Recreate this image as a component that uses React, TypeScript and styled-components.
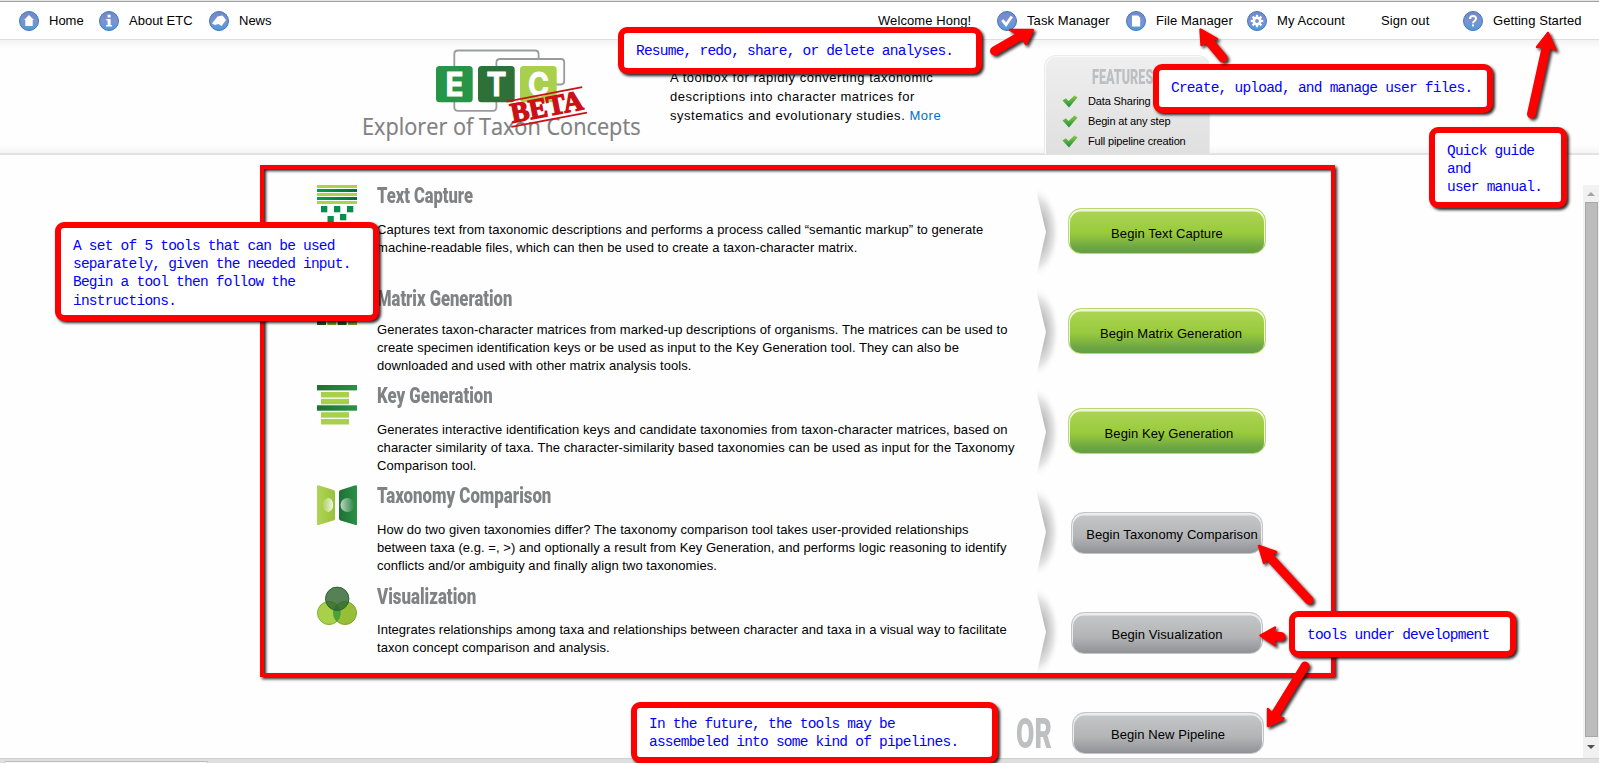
import React from "react";
import styled, { createGlobalStyle, css } from "styled-components";

const GlobalStyle = createGlobalStyle`
  *, *::before, *::after { box-sizing: border-box; }
  html, body { margin: 0; padding: 0; overflow: hidden; }
  body { background: #fefefe; color: #000; font: 13px "Liberation Sans", Arial, sans-serif; }
  h1, h2, h3, p, ul { margin: 0; padding: 0; font-weight: normal; }
`;

/* ---------- page frame ---------- */

const Page = styled.div`
  position: relative;
  display: flex;
  flex-direction: column;
  width: 1599px;
  height: 763px;
  overflow: hidden;
  background: #fefefe;
`;

const WindowEdge = styled.div`
  height: 2px;
  background: #e4e4e4;
  border-bottom: 1px solid #a0a0a0;
`;

const NavBar = styled.nav`
  display: flex;
  justify-content: space-between;
  height: 38px;
  padding: 9px 0 0 19px;
  border-bottom: 1px solid #dedede;
  background: #fff;
`;

const NavGroup = styled.div<{ $spacing?: number }>`
  display: flex;
  letter-spacing: ${(p) => p.$spacing ?? 0}px;
`;

const NavItem = styled.a<{ $width: number }>`
  display: flex;
  align-items: center;
  gap: 10px;
  width: ${(p) => p.$width}px;
  height: 20px;
  line-height: 20px;
  white-space: nowrap;
  color: #000;
`;

const Header = styled.header`
  display: flex;
  height: 115px;
  padding-left: 350px;
  border-bottom: 2px solid #e2e2e2;
  background: linear-gradient(#f3f3f3, #fefefe 9px, #fefefe calc(100% - 8px), #f5f5f5);
`;

const Intro = styled.div`
  flex: none;
  width: 394px;
  padding: 28px 0 0 20px;
  line-height: 19px;
  white-space: nowrap;
  letter-spacing: 0.54px;
`;

const MoreLink = styled.a`
  color: #0070cc;
`;

const Features = styled.aside`
  width: 166px;
  height: 99px;
  margin-top: 15px;
  padding: 11px 0 0 17px;
  border: 1px solid #ebebeb;
  border-bottom: 0;
  border-radius: 12px 12px 0 0;
  background: linear-gradient(#efefef, #dfdfdf);
  box-shadow: inset 1px 1px 0 #fafafa;
`;

const FeatureRow = styled.div`
  display: flex;
  align-items: center;
  gap: 10px;
  height: 20px;
  font-size: 11px;
  letter-spacing: -0.15px;
  white-space: nowrap;
`;

const Condensed = styled.span<{ $size: number; $stretch: number }>`
  display: block;
  width: max-content;
  font-family: Roboto, "Liberation Sans Narrow", sans-serif;
  font-weight: 900;
  font-size: ${(p) => p.$size}px;
  line-height: 1;
  white-space: nowrap;
  transform: scaleX(${(p) => p.$stretch});
  transform-origin: left;
`;

const FeaturesTitle = styled.div`
  height: 24px;
  margin-left: 30px;
  color: #bcbec0;
`;

/* ---------- tools ---------- */

const Main = styled.main`
  display: flex;
  flex: 1;
  justify-content: space-between;
  min-height: 0;
`;

const Content = styled.div`
  padding: 10px 0 0 260px;
`;

const ToolFrame = styled.section`
  width: 1075px;
  height: 512px;
  padding-top: 3px;
  overflow: hidden;
  border: 4px solid #f00;
  box-shadow: 2px 2px 3px rgba(0, 0, 0, 0.85), inset 2px 2px 3px rgba(0, 0, 0, 0.85);
`;

const ToolRow = styled.article`
  display: grid;
  grid-template-columns: 60px 655px 36px 198px;
  height: 100px;
  padding-left: 53px;
`;

const IconCell = styled.div`
  padding-top: 13px;
  svg { display: block; }
`;

const ToolTitle = styled.h2<{ $top: number }>`
  height: 49px;
  padding-top: ${(p) => p.$top}px;
  color: #808285;
`;

const ToolText = styled.p<{ $spacing: number }>`
  line-height: 18px;
  white-space: nowrap;
  letter-spacing: ${(p) => p.$spacing}px;
`;

const ButtonCell = styled.div<{ $top: number }>`
  display: flex;
  align-items: flex-start;
  justify-content: center;
  padding-top: ${(p) => p.$top}px;
`;

const buttonTones = {
  green: css`
    width: 198px;
    height: 46px;
    padding-top: 5px;
    border-color: #b9da72;
    background: linear-gradient(#aed556, #98ca3c 55%, #6ca544 88%, #62a043);
    box-shadow: inset 0 1.5px 0 1px #eef7da;
  `,
  grey: css`
    width: 192px;
    height: 42px;
    padding-top: 2px;
    border-color: #c3c4c6;
    background: linear-gradient(#c6c8ca, #b2b4b6 60%, #919296);
    box-shadow: inset 0 1.5px 0 1px #ececed;
  `,
};

const BeginButton = styled.button<{ $tone: "green" | "grey"; $shift: number }>`
  display: flex;
  align-items: center;
  justify-content: center;
  padding: 0 0 0 ${(p) => Math.max(0, p.$shift * 2)}px;
  border: 1px solid;
  border-radius: 13px;
  font: 13px "Liberation Sans", Arial, sans-serif;
  letter-spacing: 0.08px;
  white-space: nowrap;
  color: #000;
  ${(p) => buttonTones[p.$tone]}
`;

const PipelineRow = styled.div`
  display: flex;
  align-items: flex-start;
  padding: 35px 0 0 756px;
`;

const OrWord = styled.div`
  width: 56px;
  padding-top: 0;
  color: #bdbfc1;
`;

/* ---------- window chrome ---------- */

const ScrollBar = styled.div`
  display: flex;
  flex-direction: column;
  align-items: center;
  width: 16px;
  margin-top: 30px;
  background: #f1f1f1;
`;

const ScrollButton = styled.div<{ $height: number }>`
  display: flex;
  align-items: center;
  height: ${(p) => p.$height}px;
`;

const ScrollThumb = styled.div`
  width: 13px;
  height: 536px;
  border: 1px solid #a8a8a8;
  background: #bcbcbc;
`;

const StatusBar = styled.footer`
  display: flex;
  height: 5px;
  padding: 2px 0 0 4px;
  border-top: 1px solid #cfcfcf;
  background: #dfdfdf;
`;

const StatusTab = styled.div`
  width: 204px;
  border: 1px solid #bdbdbd;
  border-bottom: 0;
  border-radius: 3px 3px 0 0;
  background: #f8f8f8;
`;

/* ---------- annotations over the page ---------- */

const Callout = styled.div<{ $x: number; $y: number; $w: number; $h: number; $pad?: number }>`
  position: absolute;
  left: ${(p) => p.$x}px;
  top: ${(p) => p.$y}px;
  width: ${(p) => p.$w}px;
  height: ${(p) => p.$h}px;
  padding: ${(p) => p.$pad ?? 9}px 0 0 12px;
  border: 6px solid #f00;
  border-radius: 9px;
  background: #fff;
  box-shadow: 2px 2px 3px rgba(0, 0, 0, 0.85);
  color: #00f;
  font: 14.5px/18.2px "Liberation Mono", monospace;
  letter-spacing: -0.77px;
  white-space: nowrap;
`;

const ArrowLayer = styled.svg`
  position: absolute;
  inset: 0;
  filter: drop-shadow(2px 2px 1.5px rgba(0, 0, 0, 0.8));
`;

type Point = [number, number];

function Arrow({ tail, tip, a, b }: { tail: Point; tip: Point; a: Point; b: Point }) {
  const mid: Point = [(a[0] + b[0]) / 2, (a[1] + b[1]) / 2];
  const notch: Point = [mid[0] + (tip[0] - mid[0]) * 0.2, mid[1] + (tip[1] - mid[1]) * 0.2];
  return (
    <g fill="#f00" stroke="#f00" strokeLinecap="round" strokeLinejoin="round">
      <line x1={tail[0]} y1={tail[1]} x2={notch[0]} y2={notch[1]} strokeWidth="9" />
      <polygon points={[tip, a, notch, b].map((p) => p.join(",")).join(" ")} strokeWidth="2.5" />
    </g>
  );
}

/* ---------- drawings ---------- */

type NavGlyph = "home" | "info" | "news" | "task" | "file" | "account" | "help";

const glyphs: Record<NavGlyph, React.ReactNode> = {
  home: <path d="M10 4 15 9H13.7V15H6.3V9H5Z" fill="#fff" />,
  info: <path d="M8.6 3.8h3v2.6h-3zM7.3 8h4.3v6h1.3v1.6H7.1V14h1.5V9.6H7.3z" fill="#fff" />,
  news: <path d="M3 12.5 8.5 5.500 13.500 4.500 17 9 12.500 15 9.500 13 6 14Z" fill="#fff" />,
  task: <path d="M5.3 9.2 9 13.7 14.8 5.5" fill="none" stroke="#fff" strokeWidth="2.8" />,
  file: <path d="M6 4.5h6l2.2 2.2V15.5H6Z" fill="#fff" />,
  account: (
    <g>
      <circle cx="10" cy="10" r="3.2" fill="none" stroke="#fff" strokeWidth="2.6" />
      {[0, 45, 90, 135, 180, 225, 270, 315].map((a) => (
        <rect key={a} x="8.9" y="3.8" width="2.2" height="3" fill="#fff" transform={`rotate(${a} 10 10)`} />
      ))}
    </g>
  ),
  help: (
    <g>
      <path d="M7 8q0-3 3-3t3 2.6q0 1.5-1.5 2.4T10 12.3" fill="none" stroke="#fff" strokeWidth="2" />
      <rect x="9" y="13.4" width="2" height="2" fill="#fff" />
    </g>
  ),
};

function NavIcon({ glyph }: { glyph: NavGlyph }) {
  return (
    <svg width="20" height="20" viewBox="0 0 20 20">
      <circle cx="10" cy="10" r="9.5" fill="url(#orb)" stroke="#3f78b8" strokeWidth="1" />
      {glyphs[glyph]}
    </svg>
  );
}

const DefsSvg = styled.svg`
  position: absolute;
  width: 0;
  height: 0;
`;

function Gradients() {
  return (
    <DefsSvg>
      <defs>
        <linearGradient id="orb" x1="0" y1="0" x2="0" y2="1">
          <stop offset="0" stopColor="#6f86c9" />
          <stop offset=".5" stopColor="#7c93d0" />
          <stop offset="1" stopColor="#4d9bdc" />
        </linearGradient>
        <linearGradient id="dark" x1="0" y1="0" x2="1" y2="0">
          <stop offset="0" stopColor="#1f7034" />
          <stop offset="1" stopColor="#2a9146" />
        </linearGradient>
        <linearGradient id="teal" x1="0" y1="0" x2="1" y2="0">
          <stop offset="0" stopColor="#00a14c" />
          <stop offset="1" stopColor="#006f3a" />
        </linearGradient>
        <linearGradient id="light" x1="0" y1="0" x2="1" y2="0">
          <stop offset="0" stopColor="#b1d456" />
          <stop offset="1" stopColor="#98c23c" />
        </linearGradient>
        <linearGradient id="tick" x1="0" y1="0" x2="0" y2="1">
          <stop offset="0" stopColor="#8cc63f" />
          <stop offset="1" stopColor="#17913c" />
        </linearGradient>
        <linearGradient id="moonL" x1="0" y1="0" x2="1" y2="0">
          <stop offset="0" stopColor="#fff" stopOpacity=".1" />
          <stop offset="1" stopColor="#fff" stopOpacity=".85" />
        </linearGradient>
        <linearGradient id="moonR" x1="0" y1="0" x2="1" y2="0">
          <stop offset="0" stopColor="#fff" stopOpacity=".7" />
          <stop offset="1" stopColor="#fff" stopOpacity="0" />
        </linearGradient>
        <clipPath id="foldClip"><path d="M0 0H30V90H0L5 84 14 44 4 2Z" /></clipPath>
        <radialGradient id="foldShade" gradientUnits="userSpaceOnUse" cx="0" cy="0" r="1"
          gradientTransform="translate(4 44) scale(24 45)">
          <stop offset=".3" stopColor="#b0b0b0" />
          <stop offset=".5" stopColor="#c8c8c8" />
          <stop offset=".75" stopColor="#e6e6e6" />
          <stop offset="1" stopColor="#fefefe" stopOpacity="0" />
        </radialGradient>
      </defs>
    </DefsSvg>
  );
}

function CaptureIcon() {
  return (
    <svg width="40" height="40">
      {[0, 8, 16].map((y) => <rect key={y} y={y} width="40" height="3" fill="#acd24c" />)}
      {[4, 12].map((y) => <rect key={y} y={y} width="40" height="3" fill="url(#teal)" />)}
      {[[4, 21], [17, 21], [30, 21], [10.5, 31], [23, 29]].map(([x, y]) => (
        <rect key={x} x={x} y={y} width="6.3" height="6.3" fill="#04904a" />
      ))}
    </svg>
  );
}

function MatrixIcon() {
  return (
    <svg width="40" height="40">
      {[0, 10, 20, 30.5].map((y) =>
        [0, 10.3, 20.6, 31].map((x, i) => (
          <rect key={`${x}-${y}`} x={x} y={y} width="9" height="9.5" fill={i % 2 ? "#7f9e2a" : "#1e4e24"} />
        )),
      )}
    </svg>
  );
}

function KeyIcon() {
  return (
    <svg width="40" height="40">
      {[0, 20.3].map((y) => <rect key={y} y={y} width="40" height="5.4" fill="url(#dark)" />)}
      {[7, 13.8, 27.2, 34].map((y) => <rect key={y} x="4" y={y} width="28" height="5.5" fill="#a9d04a" />)}
    </svg>
  );
}

function ComparisonIcon() {
  return (
    <svg width="40" height="40">
      <path d="M0 1.5Q0 0 1.5 .2L16.5 5Q18 5.7 18 7V33.5Q18 35 16.5 35.4L1.5 40H0Z" fill="url(#light)" />
      <path d="M40 1.5Q40 0 38.5 .2L23.5 5Q22 5.7 22 7V33.5Q22 35 23.5 35.4L38.5 40H40Z" fill="url(#dark)" />
      <path d="M6 20a6 6 0 0 1 6-7a7 7 0 0 1 4 7a7 7 0 0 1-4 7a6 6 0 0 1-6-7Z" fill="url(#moonL)" />
      <circle cx="30.5" cy="20" r="7" fill="url(#moonR)" />
    </svg>
  );
}

function VennIcon() {
  return (
    <svg width="40" height="40">
      <circle cx="12" cy="28" r="11.5" fill="#a8d048" stroke="#7db23a" />
      <circle cx="28" cy="28" r="11.5" fill="#96be36" stroke="#7aa832" />
      <path d="M20 19.5a11.5 11.5 0 0 1 0 17a11.5 11.5 0 0 1 0-17Z" fill="#4aa03a" />
      <circle cx="20.2" cy="13.8" r="11.7" fill="#2f6530" fillOpacity=".82" stroke="#2b6632" />
    </svg>
  );
}

const Fold = styled.div`
  padding-top: 16px;
  svg { display: block; }
`;

function FoldArrow() {
  return (
    <Fold>
      <svg width="30" height="90" viewBox="0 0 30 90">
        <rect width="30" height="90" fill="url(#foldShade)" clipPath="url(#foldClip)" />
      </svg>
    </Fold>
  );
}

const LogoSvg = styled.svg`
  display: block;
  flex: none;
  width: 300px;
  height: 110px;
`;

function Logo() {
  const letters: [string, number, string, number][] = [
    ["E", 86, "#279548", 18],
    ["T", 128, "#2d7038", 20],
    ["C", 170, "#a9d04c", 21],
  ];
  return (
    <LogoSvg viewBox="0 0 300 110">
      <g fill="none" stroke="#999b9d" strokeWidth="1.8">
        <path d="M104.3 28V14Q104.3 10.5 108 10.5H185Q188.6 10.5 188.6 14V19" />
        <path d="M146.4 28V22.5Q146.4 19 150 19H211Q214.2 19 214.2 22.5V41Q214.2 44.5 211 44.5H205" />
        <path d="M104.3 60V67Q104.3 70.8 108 70.8H143Q146.4 70.8 146.4 67V60" />
      </g>
      {letters.map(([ch, x, fill, w]) => (
        <g key={ch}>
          <rect x={x} y="26" width="36.7" height="36.3" rx="3.5" fill={fill} />
          <text x={x + 18.5} y="55.5" textAnchor="middle" fill="#fff" stroke="#fff" strokeWidth=".8"
            textLength={w} lengthAdjust="spacingAndGlyphs"
            fontFamily="Inter, sans-serif" fontWeight="700" fontSize="33">{ch}</text>
        </g>
      ))}
      <text x="12" y="95.3" fill="#808080" stroke="#808080" strokeWidth=".2"
        textLength="278.5" lengthAdjust="spacingAndGlyphs"
        fontFamily='"Open Sans", sans-serif' fontSize="23.5">Explorer of Taxon Concepts</text>
      <g transform="translate(156.5 61.5) rotate(-10.8)" fill="#cc1016">
        <rect x="0" y="-.8" width="77" height="1.8" />
        <rect x="0" y="25" width="77" height="1.8" />
        <text x="2" y="22" textLength="73" lengthAdjust="spacingAndGlyphs" stroke="#cc1016" strokeWidth="1.4"
          fontFamily='"Liberation Serif", serif' fontWeight="700" fontSize="28">BETA</text>
      </g>
    </LogoSvg>
  );
}

function Tick() {
  return (
    <svg width="16" height="13" viewBox="0 0 16 13">
      <path d="M.5 5.5 4 3.2 6.5 6 12.5 .6 15.5 2.5 7 12.5Z" fill="url(#tick)" />
    </svg>
  );
}

/* ---------- data ---------- */

const tools = [
  {
    title: "Text Capture", stretch: 0.733, top: 12, icon: <CaptureIcon />, spacing: 0.05,
    lines: [
      "Captures text from taxonomic descriptions and performs a process called “semantic markup” to generate",
      "machine-readable files, which can then be used to create a taxon-character matrix.",
    ],
    button: "Begin Text Capture", tone: "green" as const, shift: -1,
  },
  {
    title: "Matrix Generation", stretch: 0.738, top: 15, icon: <MatrixIcon />, spacing: 0.055,
    lines: [
      "Generates taxon-character matrices from marked-up descriptions of organisms. The matrices can be used to",
      "create specimen identification keys or be used as input to the Key Generation tool. They can also be",
      "downloaded and used with other matrix analysis tools.",
    ],
    button: "Begin Matrix Generation", tone: "green" as const, shift: 4,
  },
  {
    title: "Key Generation", stretch: 0.744, top: 12, icon: <KeyIcon />, spacing: 0.08,
    lines: [
      "Generates interactive identification keys and candidate taxonomies from taxon-character matrices, based on",
      "character similarity of taxa. The character-similarity based taxonomies can be used as input for the Taxonomy",
      "Comparison tool.",
    ],
    button: "Begin Key Generation", tone: "green" as const, shift: 2,
  },
  {
    title: "Taxonomy Comparison", stretch: 0.748, top: 12, icon: <ComparisonIcon />, spacing: 0.04,
    lines: [
      "How do two given taxonomies differ? The taxonomy comparison tool takes user-provided relationships",
      "between taxa (e.g. =, >) and optionally a result from Key Generation, and performs logic reasoning to identify",
      "conflicts and/or ambiguity and finally align two taxonomies.",
    ],
    button: "Begin Taxonomy Comparison", tone: "grey" as const, shift: 5,
  },
  {
    title: "Visualization", stretch: 0.75, top: 13, icon: <VennIcon />, spacing: 0.035,
    lines: [
      "Integrates relationships among taxa and relationships between character and taxa in a visual way to facilitate",
      "taxon concept comparison and analysis.",
    ],
    button: "Begin Visualization", tone: "grey" as const, shift: 0,
  },
];

const Lines = ({ lines }: { lines: string[] }) => (
  <>{lines.map((line) => <div key={line}>{line}</div>)}</>
);

export default function App() {
  return (
    <Page>
      <GlobalStyle />
      <Gradients />
      <WindowEdge />
      <NavBar>
        <NavGroup>
          <NavItem $width={80}><NavIcon glyph="home" />Home</NavItem>
          <NavItem $width={110}><NavIcon glyph="info" />About ETC</NavItem>
          <NavItem $width={80}><NavIcon glyph="news" />News</NavItem>
        </NavGroup>
        <NavGroup $spacing={0.08}>
          <NavItem $width={119} as="span">Welcome Hong!</NavItem>
          <NavItem $width={129}><NavIcon glyph="task" />Task Manager</NavItem>
          <NavItem $width={121}><NavIcon glyph="file" />File Manager</NavItem>
          <NavItem $width={134}><NavIcon glyph="account" />My Account</NavItem>
          <NavItem $width={82}>Sign out</NavItem>
          <NavItem $width={136}><NavIcon glyph="help" />Getting Started</NavItem>
        </NavGroup>
      </NavBar>
      <Header>
        <Logo />
        <Intro>
          <div>A toolbox for rapidly converting taxonomic</div>
          <div>descriptions into character matrices for</div>
          <div>systematics and evolutionary studies. <MoreLink>More</MoreLink></div>
        </Intro>
        <Features>
          <FeaturesTitle><Condensed $size={21} $stretch={0.6}>FEATURES</Condensed></FeaturesTitle>
          {["Data Sharing", "Begin at any step", "Full pipeline creation"].map((label) => (
            <FeatureRow key={label}><Tick />{label}</FeatureRow>
          ))}
        </Features>
      </Header>
      <Main>
        <Content>
          <ToolFrame>
            {tools.map((tool) => (
              <ToolRow key={tool.title}>
                <IconCell>{tool.icon}</IconCell>
                <div>
                  <ToolTitle $top={tool.top}>
                    <Condensed $size={22.5} $stretch={tool.stretch}>{tool.title}</Condensed>
                  </ToolTitle>
                  <ToolText $spacing={tool.spacing}><Lines lines={tool.lines} /></ToolText>
                </div>
                <FoldArrow />
                <ButtonCell $top={tool.tone === "green" ? 36 : 40}>
                  <BeginButton $tone={tool.tone} $shift={tool.shift}>{tool.button}</BeginButton>
                </ButtonCell>
              </ToolRow>
            ))}
          </ToolFrame>
          <PipelineRow>
            <OrWord><Condensed $size={43} $stretch={0.62}>OR</Condensed></OrWord>
            <BeginButton $tone="grey" $shift={0}>Begin New Pipeline</BeginButton>
          </PipelineRow>
        </Content>
        <ScrollBar>
          <ScrollButton $height={17}><svg width="8" height="5"><path d="M0 5 4 1 8 5Z" fill="#a3a3a3" /></svg></ScrollButton>
          <ScrollThumb />
          <ScrollButton $height={21}><svg width="8" height="5"><path d="M0 0 4 4 8 0Z" fill="#505050" /></svg></ScrollButton>
        </ScrollBar>
      </Main>
      <StatusBar><StatusTab /></StatusBar>

      <Callout $x={618} $y={27} $w={364} $h={47}>Resume, redo, share, or delete analyses.</Callout>
      <Callout $x={1153} $y={64} $w={340} $h={49}>Create, upload, and manage user files.</Callout>
      <Callout $x={1429} $y={127} $w={138} $h={81}><Lines lines={["Quick guide", "and", "user manual."]} /></Callout>
      <Callout $x={55} $y={222} $w={324} $h={99}>
        <Lines lines={["A set of 5 tools that can be used", "separately, given the needed input.", "Begin a tool then follow the", "instructions."]} />
      </Callout>
      <Callout $x={1289} $y={611} $w={227} $h={46}>tools under development</Callout>
      <Callout $x={631} $y={702} $w={367} $h={61} $pad={7}>
        <Lines lines={["In the future, the tools may be", "assembeled into some kind of pipelines."]} />
      </Callout>
      <ArrowLayer width="1599" height="763">
        <Arrow tail={[994.5, 51]} tip={[1033, 30]} a={[1010, 30]} b={[1026, 44]} />
        <Arrow tail={[1223, 58]} tip={[1200.5, 29.5]} a={[1201.5, 45]} b={[1217, 39]} />
        <Arrow tail={[1531.5, 114]} tip={[1548, 33]} a={[1537, 47]} b={[1555.5, 50]} />
        <Arrow tail={[1309, 600]} tip={[1259, 546]} a={[1276, 552]} b={[1264, 563]} />
        <Arrow tail={[1281, 636.5]} tip={[1260.5, 635.5]} a={[1275, 627.5]} b={[1275, 645]} />
        <Arrow tail={[1305, 666]} tip={[1268, 726]} a={[1268, 709]} b={[1283.5, 718.5]} />
      </ArrowLayer>
    </Page>
  );
}
